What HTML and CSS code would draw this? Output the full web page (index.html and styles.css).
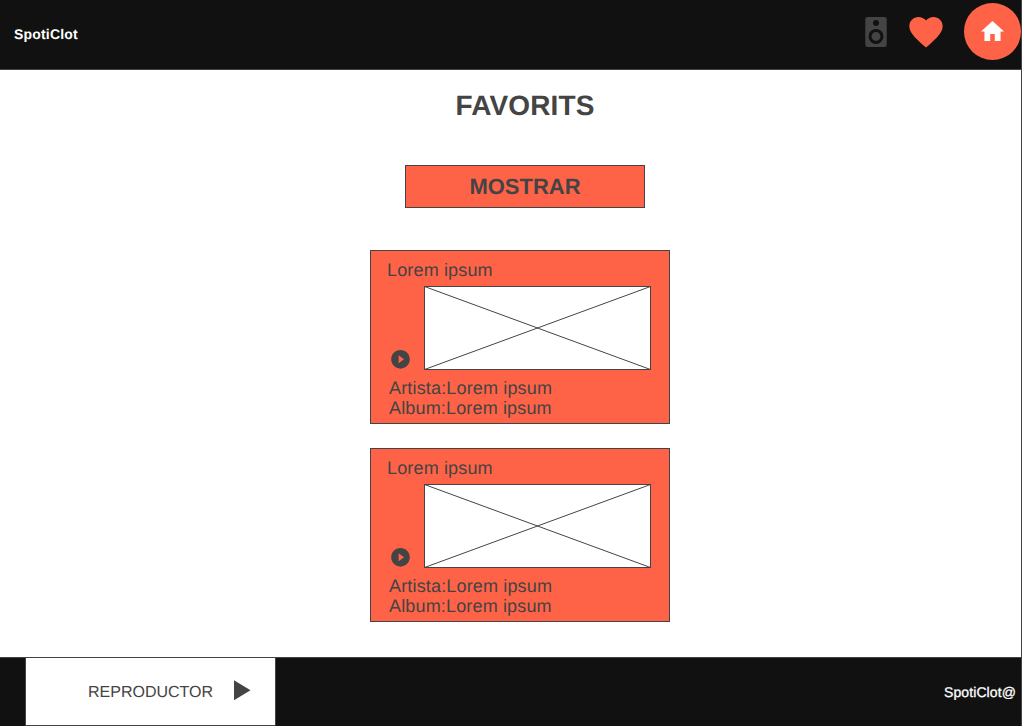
FILE: index.html
```
<!DOCTYPE html>
<html lang="ca">
<head>
<meta charset="utf-8">
<title>SpotiClot</title>
<link rel="stylesheet" href="styles.css">
</head>
<body>
<div class="page">
  <header class="header">
    <span class="brand">SpotiClot</span>
    <nav class="nav">
      <svg class="speaker" width="22" height="30" viewBox="0 0 22 30"><rect x=".3" width="21.4" height="30" rx="2.5" fill="#444"/><circle cx="11" cy="6" r="3" fill="#111"/><circle cx="11" cy="19.4" r="6" fill="none" stroke="#111" stroke-width="3"/></svg>
      <svg class="heart" width="34" height="31" viewBox="1.8 3 20.4 18.6" preserveAspectRatio="none"><path fill="#ff6347" d="M12 21.35l-1.45-1.32C5.4 15.36 2 12.28 2 8.5 2 5.42 4.42 3 7.5 3c1.74 0 3.41.81 4.5 2.09C13.09 3.81 14.76 3 16.5 3 19.58 3 22 5.42 22 8.5c0 3.78-3.4 6.86-8.55 11.54L12 21.35z"/></svg>
      <span class="home"><svg width="23" height="20" viewBox="2 3 20 17" preserveAspectRatio="none"><path fill="#fff" d="M10 20v-6h4v6h5v-8h3L12 3 2 12h3v8z"/></svg></span>
    </nav>
  </header>
  <main class="main">
    <h1 class="title">FAVORITS</h1>
    <button class="show">MOSTRAR</button>
    <article class="card">
      <h2 class="song">Lorem ipsum</h2>
      <div class="media">
        <svg class="play" width="19" height="19" viewBox="1.8 2 20.4 20.4"><path fill="#444" d="M12 2C6.48 2 2 6.48 2 12s4.48 10 10 10 10-4.48 10-10S17.52 2 12 2zm-2 14.3V7.7l5.8 4.3z"/></svg>
        <svg class="cover" width="227" height="84" viewBox="0 0 227 84"><rect x=".5" y=".5" width="226" height="83" fill="#fff" stroke="#444"/><path d="M.5.5l226 83M.5 83.5l226-83" stroke="#444"/></svg>
      </div>
      <p class="info">Artista:Lorem ipsum<br>Album:Lorem ipsum</p>
    </article>
    <article class="card">
      <h2 class="song">Lorem ipsum</h2>
      <div class="media">
        <svg class="play" width="19" height="19" viewBox="1.8 2 20.4 20.4"><path fill="#444" d="M12 2C6.48 2 2 6.48 2 12s4.48 10 10 10 10-4.48 10-10S17.52 2 12 2zm-2 14.3V7.7l5.8 4.3z"/></svg>
        <svg class="cover" width="227" height="84" viewBox="0 0 227 84"><rect x=".5" y=".5" width="226" height="83" fill="#fff" stroke="#444"/><path d="M.5.5l226 83M.5 83.5l226-83" stroke="#444"/></svg>
      </div>
      <p class="info">Artista:Lorem ipsum<br>Album:Lorem ipsum</p>
    </article>
  </main>
  <footer class="footer">
    <div class="player"><span>REPRODUCTOR</span><svg width="17" height="21" viewBox="0 0 17 21"><path fill="#444" d="M0 .3l16.5 10L0 20.3z"/></svg></div>
    <span class="credit">SpotiClot@</span>
  </footer>
</div>
</body>
</html>
```

FILE: styles.css
```
* { box-sizing: border-box; }
body { margin: 0; font-family: "Liberation Sans", Arial, sans-serif; color: #444; background: #fff; text-rendering: geometricPrecision; }
svg { display: block; flex: none; }
.page { height: 726px; display: flex; flex-direction: column; border-right: 1px solid #444; overflow: hidden; }
.header { height: 70px; flex: none; display: flex; justify-content: space-between; background: #111; border-bottom: 1px solid #444; }
.brand { padding: 26px 0 0 14px; font-size: 14px; line-height: 16px; font-weight: bold; letter-spacing: .18px; color: #fff; }
.nav { display: flex; align-items: flex-start; }
.speaker { margin: 17px 22px 0 0; }
.heart { margin: 17px 21px 0 0; }
.home { width: 57px; height: 57px; margin-top: 3px; padding: 17.5px 0 0 16.5px; border-radius: 50%; background: #ff6347; }
.main { flex: 1; display: flex; flex-direction: column; align-items: flex-start; padding-left: 370px; }
.title { width: 240px; margin: 20px 0 0 35px; text-align: center; font-size: 28px; line-height: 32px; font-weight: bold; letter-spacing: .15px; }
.show { width: 240px; height: 43px; margin: 43px 0 42px 35px; padding: 0; border: 1px solid #444; background: #ff6347; color: #444; font: bold 22px/25px "Liberation Sans", Arial, sans-serif; text-rendering: inherit; }
.card { width: 300px; height: 174px; margin: 0 0 24px; padding: 9px 0 0 16px; border: 1px solid #444; background: #ff6347; }
.song { margin: 0; font-size: 18px; line-height: 20px; font-weight: normal; letter-spacing: .15px; }
.media { display: flex; align-items: flex-end; margin-top: 6px; }
.play { margin: 0 14px 1px 4px; }
.info { margin: 8px 0 0 2px; font-size: 18px; line-height: 20px; letter-spacing: .16px; }
.footer { height: 69px; flex: none; display: flex; justify-content: space-between; background: #111; border-top: 1px solid #444; }
.player { width: 251px; height: 68px; margin-left: 25px; padding: 0 0 0 62px; display: flex; border: 1px solid #444; border-top: 0; background: #fff; font-size: 16px; line-height: 18px; }
.player span { padding-top: 26px; }
.player svg { margin: 22px 0 0 21px; }
.credit { padding: 26px 5px 0 0; font-size: 14px; line-height: 16px; color: #fff; letter-spacing: .1px; -webkit-text-stroke: .3px #fff; }
```
